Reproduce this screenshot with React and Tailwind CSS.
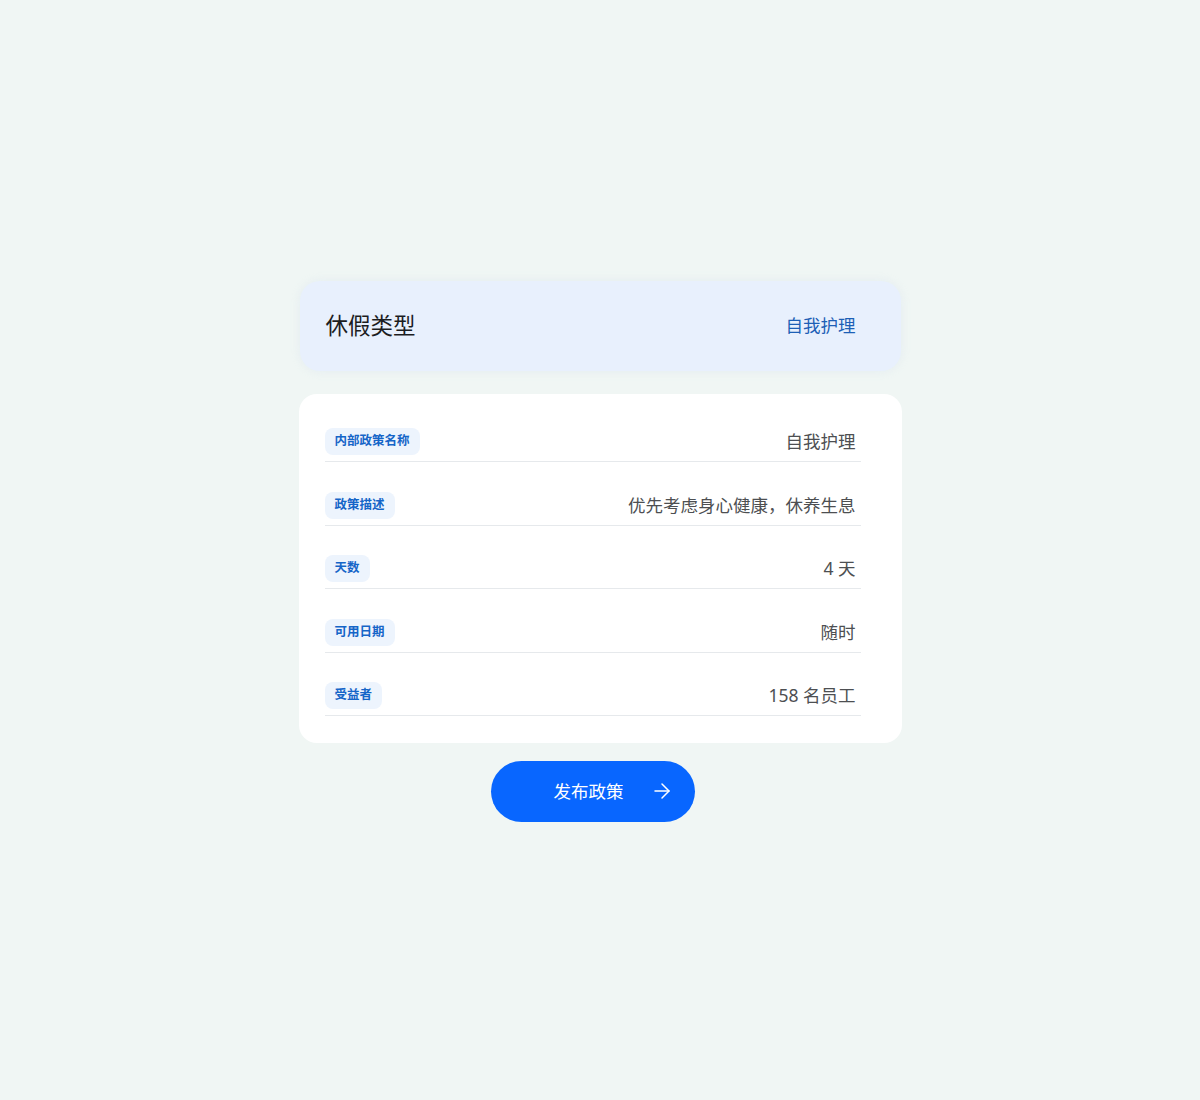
import React from 'react'
import { ArrowRight } from 'lucide-react'

const rows = [
  { label: '内部政策名称', value: '自我护理' },
  { label: '政策描述', value: '优先考虑身心健康，休养生息' },
  { label: '天数', value: '4 天' },
  { label: '可用日期', value: '随时' },
  { label: '受益者', value: '158 名员工' },
]

const PolicyRow = ({ label, value }) => (
  <div className="h-[63.5px] flex items-end border-b border-[#e6e9ec] pb-[6px] pr-[5px]">
    <div className="flex w-full items-center justify-between">
      <span className="rounded-[8px] bg-[#edf4fd] px-[10px] h-[27px] flex items-center text-[12.5px] font-bold text-[#1565c8]">
        {label}
      </span>
      <span className="text-[17.5px] text-[#4d4f52]">{value}</span>
    </div>
  </div>
)

const App = () => {
  return (
    <div
      className="min-h-[1100px] bg-[#f0f6f4] flex flex-col items-center justify-center"
      style={{ fontFamily: '"Noto Sans", "Noto Sans CJK SC", sans-serif' }}
    >
      <div className="w-[603px] translate-y-[1px]">
        {/* leave type header */}
        <div className="mx-[1px] h-[90px] rounded-[20px] bg-[#e8f0fd] shadow-[0_0_10px_rgba(200,215,235,0.3)] flex items-center justify-between pl-[26px] pr-[45px]">
          <span className="text-[22.5px] text-[#1c1d1f]">休假类型</span>
          <span className="text-[17.5px] text-[#1d5fb6]">自我护理</span>
        </div>

        {/* policy details */}
        <div className="mt-[23px] rounded-[18px] bg-white pt-[5px] pb-[26.5px] pl-[26px] pr-[41px]">
          {rows.map((r) => (
            <PolicyRow key={r.label} label={r.label} value={r.value} />
          ))}
        </div>

        <div className="mt-[18px] flex justify-center pr-[15px]">
          <button className="h-[61px] w-[204px] rounded-full bg-[#0866ff] flex items-center pl-[63px] text-white">
            <span className="text-[17.5px]">发布政策</span>
            <ArrowRight className="ml-[26px] w-[24px] h-[24px]" strokeWidth={1.5} />
          </button>
        </div>
      </div>
    </div>
  )
}

export default App
